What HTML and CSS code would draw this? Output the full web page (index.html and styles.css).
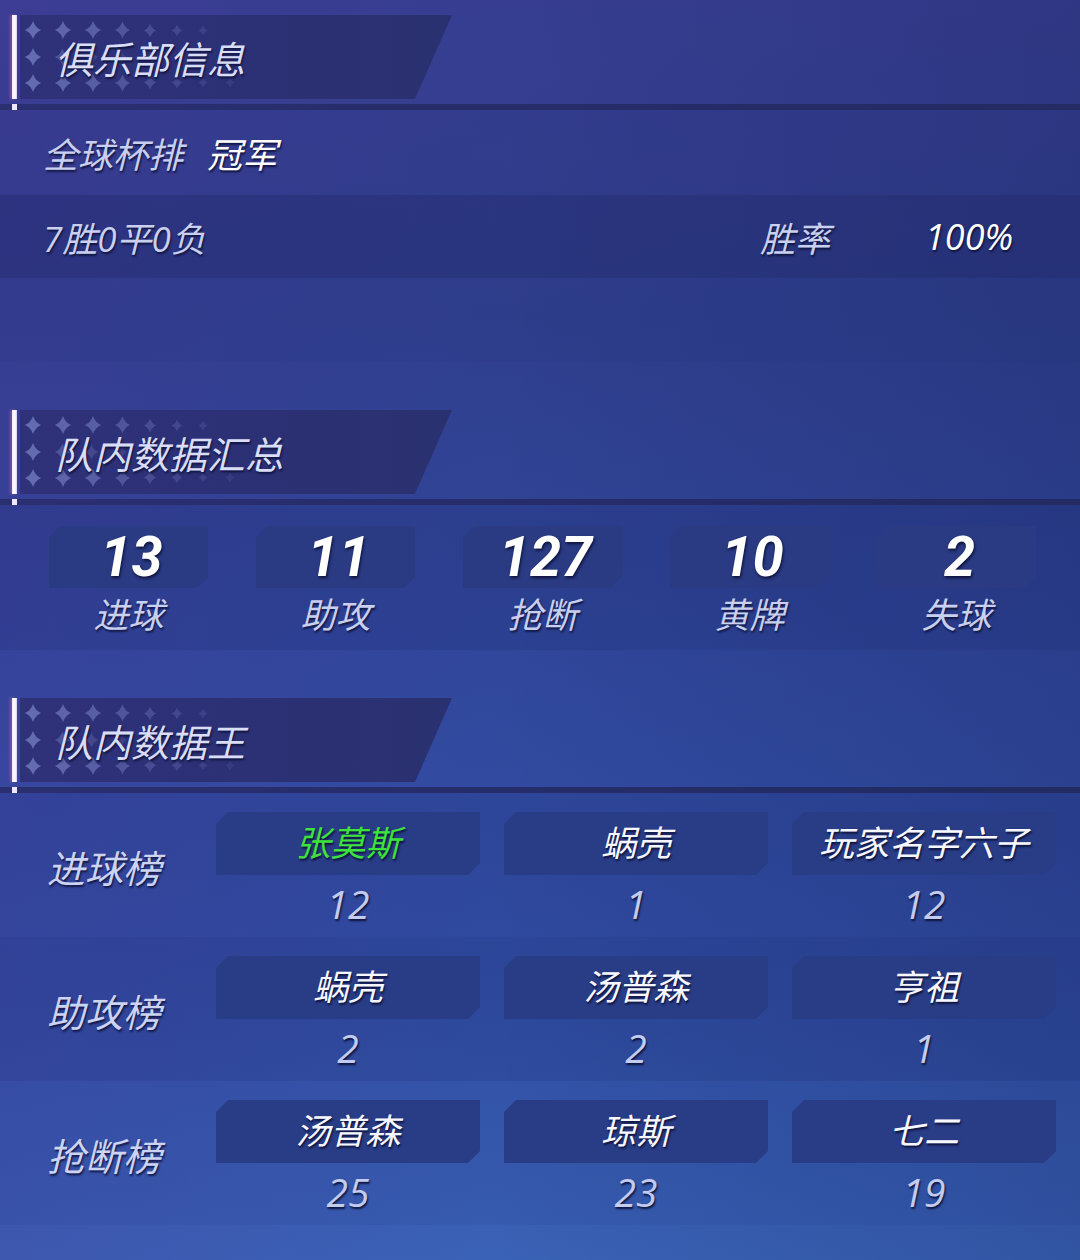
FILE: index.html
```html
<!DOCTYPE html>
<html lang="zh-CN">
<head>
<meta charset="utf-8">
<title>俱乐部信息</title>
<link rel="stylesheet" href="styles.css">
</head>
<body>
<svg class="defs" width="0" height="0" aria-hidden="true">
  <defs>
    <symbol id="spark" viewBox="-10 -10 20 20">
      <path d="M0 -10Q2.6 -2.6 9 0Q2.6 2.6 0 10Q-2.6 2.6 -9 0Q-2.6 -2.6 0 -10Z"/>
    </symbol>
    <g id="starfield" fill="#9aa3e6">
      <use href="#spark" x="4" y="5" width="18" height="20" opacity=".5"/>
      <use href="#spark" x="34" y="5" width="18" height="20" opacity=".45"/>
      <use href="#spark" x="64" y="5" width="18" height="20" opacity=".4"/>
      <use href="#spark" x="94" y="6" width="17" height="18" opacity=".32"/>
      <use href="#spark" x="123" y="8" width="14" height="15" opacity=".25"/>
      <use href="#spark" x="151" y="9" width="12" height="13" opacity=".2"/>
      <use href="#spark" x="178" y="10" width="10" height="11" opacity=".15"/>
      <use href="#spark" x="4" y="32" width="18" height="20" opacity=".5"/>
      <use href="#spark" x="34" y="33" width="17" height="18" opacity=".3"/>
      <use href="#spark" x="64" y="34" width="15" height="16" opacity=".2"/>
      <use href="#spark" x="95" y="35" width="13" height="14" opacity=".15"/>
      <use href="#spark" x="4" y="58" width="18" height="20" opacity=".5"/>
      <use href="#spark" x="34" y="58" width="18" height="20" opacity=".45"/>
      <use href="#spark" x="64" y="58" width="18" height="20" opacity=".4"/>
      <use href="#spark" x="94" y="59" width="17" height="18" opacity=".32"/>
      <use href="#spark" x="123" y="60" width="14" height="15" opacity=".25"/>
      <use href="#spark" x="151" y="61" width="12" height="13" opacity=".2"/>
      <use href="#spark" x="178" y="62" width="10" height="11" opacity=".15"/>
      <use href="#spark" x="205" y="62" width="10" height="11" opacity=".1"/>
    </g>
  </defs>
</svg>
<div class="page">

  <div class="sec-head">
    <div class="bar"></div>
    <div class="banner">
      <svg class="stars" width="240" height="84" viewBox="0 0 240 84" aria-hidden="true"><use href="#starfield"/></svg>
      <h2 class="title">俱乐部信息</h2>
    </div>
  </div>
  <div class="sec-rule"></div>

  <div class="info-row">
    <span class="muted">全球杯排</span><span class="strong">冠军</span>
  </div>
  <div class="info-row dark">
    <span class="muted record">7胜0平0负</span>
    <span class="muted rate-label">胜率</span>
    <span class="strong rate">100%</span>
  </div>
  <div class="blank-a"></div>
  <div class="blank-b"></div>

  <div class="sec-head">
    <div class="bar"></div>
    <div class="banner">
      <svg class="stars" width="240" height="84" viewBox="0 0 240 84" aria-hidden="true"><use href="#starfield"/></svg>
      <h2 class="title">队内数据汇总</h2>
    </div>
  </div>
  <div class="sec-rule"></div>

  <div class="stats">
    <div class="stat"><div class="stat-box">13</div><div class="stat-label">进球</div></div>
    <div class="stat"><div class="stat-box">11</div><div class="stat-label">助攻</div></div>
    <div class="stat"><div class="stat-box">127</div><div class="stat-label">抢断</div></div>
    <div class="stat"><div class="stat-box">10</div><div class="stat-label">黄牌</div></div>
    <div class="stat"><div class="stat-box">2</div><div class="stat-label">失球</div></div>
  </div>
  <div class="blank-c"></div>

  <div class="sec-head">
    <div class="bar"></div>
    <div class="banner">
      <svg class="stars" width="240" height="84" viewBox="0 0 240 84" aria-hidden="true"><use href="#starfield"/></svg>
      <h2 class="title">队内数据王</h2>
    </div>
  </div>
  <div class="sec-rule"></div>

  <div class="leader-row first">
    <div class="leader-label">进球榜</div>
    <div class="leader"><div class="name-box win">张莫斯</div><div class="leader-num">12</div></div>
    <div class="leader"><div class="name-box">蜗壳</div><div class="leader-num">1</div></div>
    <div class="leader"><div class="name-box">玩家名字六子</div><div class="leader-num">12</div></div>
  </div>
  <div class="leader-row alt">
    <div class="leader-label">助攻榜</div>
    <div class="leader"><div class="name-box">蜗壳</div><div class="leader-num">2</div></div>
    <div class="leader"><div class="name-box">汤普森</div><div class="leader-num">2</div></div>
    <div class="leader"><div class="name-box">亨祖</div><div class="leader-num">1</div></div>
  </div>
  <div class="leader-row last">
    <div class="leader-label">抢断榜</div>
    <div class="leader"><div class="name-box">汤普森</div><div class="leader-num">25</div></div>
    <div class="leader"><div class="name-box">琼斯</div><div class="leader-num">23</div></div>
    <div class="leader"><div class="name-box">七二</div><div class="leader-num">19</div></div>
  </div>

</div>
</body>
</html>
```

FILE: styles.css
```css
* { box-sizing: border-box; }

html, body {
  margin: 0;
  padding: 0;
}

body {
  width: 1080px;
  height: 1260px;
  overflow: hidden;
  font-family: "Open Sans", "Noto Sans CJK SC", sans-serif;
  background:
    linear-gradient(90deg, rgba(75, 55, 155, 0.24) 0%, rgba(40, 40, 120, 0) 45%, rgba(8, 16, 60, 0.16) 100%),
    linear-gradient(180deg, #373e91 0%, #303f8e 25%, #30469a 50%, #3350a6 75%, #3a62b6 100%);
}

.defs {
  position: absolute;
  width: 0;
  height: 0;
}

.page {
  padding-top: 15px;
}

/* ---------- section headers ---------- */
.sec-head {
  display: flex;
  height: 84px;
}

.bar {
  width: 5px;
  margin-left: 12px;
  background: linear-gradient(90deg, #f3e8ff 0%, #ffffff 60%, #d9c8f5 100%);
  box-shadow: -2px 0 3px rgba(190, 100, 200, 0.5);
}

.banner {
  position: relative;
  margin-left: 3px;
  width: 432px;
  height: 100%;
  background: linear-gradient(90deg, #2f3279 0%, #2c3075 50%, #2a3170 100%);
  clip-path: polygon(0 0, 100% 0, calc(100% - 37px) 100%, 0 100%);
  display: flex;
  align-items: center;
}

.stars {
  position: absolute;
  left: 0;
  top: 0;
  filter: blur(0.6px);
}

.title {
  position: relative;
  margin: 0 0 0 35px;
  font-size: 38px;
  font-weight: 400;
  font-style: italic;
  color: #d9ddf6;
  text-shadow: 1px 2px 2px rgba(12, 16, 55, 0.85);
}

.sec-rule {
  position: relative;
  margin-top: 5px;
  height: 6px;
  background: linear-gradient(90deg, #2a2f70 0%, #252c68 60%, #232b62 100%);
}

.sec-rule::before {
  content: "";
  position: absolute;
  left: 12px;
  top: 0;
  width: 5px;
  height: 6px;
  background: #efe6ff;
}

/* ---------- club info ---------- */
.info-row {
  display: flex;
  align-items: center;
  height: 85px;
  padding-left: 43px;
  font-size: 35px;
  font-style: italic;
  background: rgba(40, 50, 120, 0.12);
}

.info-row.dark {
  height: 83px;
  background: linear-gradient(90deg, rgba(22, 30, 90, 0.32) 0%, rgba(22, 30, 85, 0.25) 100%);
}

.muted {
  color: #c9cfee;
  text-shadow: 1px 2px 2px rgba(12, 16, 55, 0.85);
}

.strong {
  color: #ffffff;
  text-shadow: 1px 2px 2px rgba(12, 16, 55, 0.9);
}

.info-row .strong {
  margin-left: 24px;
}

.record {
  width: 717px;
}

.rate-label {
  width: 165px;
}

.info-row .rate {
  margin-left: 0;
  font-size: 36px;
}

.blank-a {
  height: 84px;
  background: rgba(30, 45, 120, 0.1);
}

.blank-b {
  height: 48px;
}

/* ---------- team stats ---------- */
.stats {
  display: flex;
  gap: 48px;
  height: 145px;
  padding: 21px 0 0 49px;
  background: rgba(25, 35, 105, 0.16);
}

.stat {
  width: 159px;
  display: flex;
  flex-direction: column;
  align-items: center;
}

.stat-box {
  width: 159px;
  height: 62px;
  display: flex;
  align-items: center;
  justify-content: center;
  padding-left: 6px;
  background: #2a3b84;
  clip-path: polygon(11px 0, 100% 0, 100% calc(100% - 11px), calc(100% - 11px) 100%, 0 100%, 0 11px);
  font-family: Roboto, "Open Sans", sans-serif;
  font-size: 56px;
  font-weight: 700;
  font-style: italic;
  color: #ffffff;
  line-height: 1;
  text-shadow: 1px 2px 3px rgba(10, 14, 50, 0.9);
}

.stat-label {
  margin-top: 8px;
  height: 38px;
  line-height: 38px;
  font-size: 35px;
  font-style: italic;
  color: #c9cfee;
  text-shadow: 1px 2px 2px rgba(12, 16, 55, 0.85);
}

.blank-c {
  height: 48px;
}

/* ---------- leaders ---------- */
.leader-row {
  display: flex;
  align-items: flex-start;
  gap: 24px;
  height: 144px;
  padding-top: 19px;
  background: rgba(25, 35, 110, 0.12);
}

.leader-row.alt {
  background: rgba(20, 30, 100, 0.2);
}

.leader-row.last {
  background: rgba(35, 55, 140, 0.12);
}

.leader-label {
  width: 192px;
  height: 108px;
  display: flex;
  align-items: center;
  padding-left: 47px;
  font-size: 38px;
  font-style: italic;
  color: #cdd3f2;
  text-shadow: 1px 2px 2px rgba(12, 16, 55, 0.85);
}

.leader {
  width: 264px;
  display: flex;
  flex-direction: column;
  align-items: center;
}

.name-box {
  width: 264px;
  height: 63px;
  display: flex;
  align-items: center;
  justify-content: center;
  padding-bottom: 6px;
  background: #293c86;
  clip-path: polygon(12px 0, 100% 0, 100% calc(100% - 12px), calc(100% - 12px) 100%, 0 100%, 0 12px);
  font-size: 35px;
  font-style: italic;
  color: #f7f8ff;
  text-shadow: 1px 2px 2px rgba(10, 14, 50, 0.9);
}

.name-box.win {
  color: #3ee23c;
}

.leader-num {
  margin-top: 3px;
  height: 52px;
  line-height: 52px;
  font-size: 39px;
  font-style: italic;
  color: #c3cbee;
  text-shadow: 1px 2px 2px rgba(10, 14, 50, 0.9);
}
```
